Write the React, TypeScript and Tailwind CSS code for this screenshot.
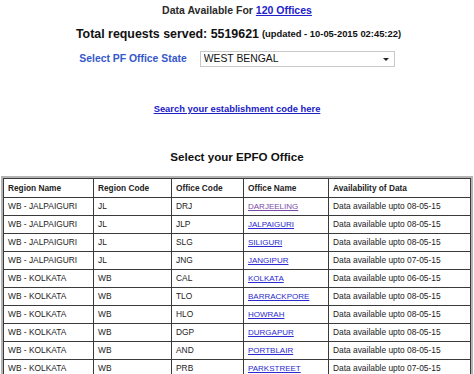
import { useState } from "react";

interface OfficeRow {
  region: string;
  regionCode: string;
  officeCode: string;
  officeName: string;
  upto: string;
  visited?: boolean;
}

const OFFICES: OfficeRow[] = [
  { region: "WB - JALPAIGURI", regionCode: "JL", officeCode: "DRJ", officeName: "DARJEELING", upto: "08-05-15", visited: true },
  { region: "WB - JALPAIGURI", regionCode: "JL", officeCode: "JLP", officeName: "JALPAIGURI", upto: "08-05-15" },
  { region: "WB - JALPAIGURI", regionCode: "JL", officeCode: "SLG", officeName: "SILIGURI", upto: "08-05-15" },
  { region: "WB - JALPAIGURI", regionCode: "JL", officeCode: "JNG", officeName: "JANGIPUR", upto: "07-05-15" },
  { region: "WB - KOLKATA", regionCode: "WB", officeCode: "CAL", officeName: "KOLKATA", upto: "06-05-15" },
  { region: "WB - KOLKATA", regionCode: "WB", officeCode: "TLO", officeName: "BARRACKPORE", upto: "08-05-15" },
  { region: "WB - KOLKATA", regionCode: "WB", officeCode: "HLO", officeName: "HOWRAH", upto: "08-05-15" },
  { region: "WB - KOLKATA", regionCode: "WB", officeCode: "DGP", officeName: "DURGAPUR", upto: "08-05-15" },
  { region: "WB - KOLKATA", regionCode: "WB", officeCode: "AND", officeName: "PORTBLAIR", upto: "08-05-15" },
  { region: "WB - KOLKATA", regionCode: "WB", officeCode: "PRB", officeName: "PARKSTREET", upto: "07-05-15" },
];

const cell = "border border-[#3a3a3a] px-[4px] text-left align-middle";

export default function App() {
  const [state, setState] = useState("WEST BENGAL");

  return (
    <div className="flex min-h-[374px] w-[474px] flex-col items-center overflow-hidden bg-white font-['Liberation_Sans',Arial,sans-serif] text-[#222]">
      {/* counters */}
      <div className="h-[20px] text-[10.5px] font-bold leading-[20px] text-[#2a2a2a]">
        Data Available For{" "}
        <a href="#" className="text-[#2222cc] underline">
          120 Offices
        </a>
      </div>
      <div className="flex h-[28px] items-center gap-[3px] pl-[3px] text-[#111]">
        <span className="text-[12.4px] font-bold">Total requests served: 5519621</span>
        <span className="text-[9.4px] font-bold">(updated - 10-05-2015 02:45:22)</span>
      </div>

      {/* state picker */}
      <div className="flex h-[22px] items-center gap-[13px]">
        <label className="text-[10.4px] font-bold text-[#3558cc]">Select PF Office State</label>
        <div className="relative flex h-[16px]">
          <select
            value={state}
            onChange={(e) => setState(e.target.value)}
            className="h-[16px] w-[195px] appearance-none rounded-none border border-[#c8c8c8] bg-white pl-[3px] text-[10.4px] leading-[14px] text-[#111] outline-none"
          >
            <option>WEST BENGAL</option>
            <option>KERALA</option>
            <option>TAMIL NADU</option>
          </select>
          <span className="pointer-events-none absolute right-[6px] top-[7px] h-0 w-0 border-x-[3px] border-t-[3px] border-x-transparent border-t-[#222]" />
        </div>
      </div>

      <div className="mt-[27px] h-[20px] leading-[20px]">
        <a href="#" className="text-[9.4px] font-bold text-[#2020c8] underline">
          Search your establishment code here
        </a>
      </div>

      <div className="mt-[30px] h-[20px] text-[11.6px] font-bold leading-[20px] text-[#111]">
        Select your EPFO Office
      </div>

      {/* offices table */}
      <div className="mt-[9px] w-[472px] border-2 border-[#b4b4b4]">
        <table className="w-full table-fixed border-collapse text-[8.4px] text-[#222]">
          <colgroup>
            <col className="w-[90px]" />
            <col className="w-[78px]" />
            <col className="w-[72px]" />
            <col className="w-[85px]" />
            <col />
          </colgroup>
          <thead>
            <tr className="h-[19px] font-bold text-[8.3px]">
              <th className={cell}>Region Name</th>
              <th className={cell}>Region Code</th>
              <th className={cell}>Office Code</th>
              <th className={cell}>Office Name</th>
              <th className={cell}>Availability of Data</th>
            </tr>
          </thead>
          <tbody>
            {OFFICES.map((o) => (
              <tr key={o.officeCode} className="h-[18px]">
                <td className={cell}>{o.region}</td>
                <td className={cell}>{o.regionCode}</td>
                <td className={cell}>{o.officeCode}</td>
                <td className={cell}>
                  <a
                    href="#"
                    className={`text-[8px] underline ${
                      o.visited ? "text-[#7a4aa6]" : "text-[#2a2ad0]"
                    }`}
                  >
                    {o.officeName}
                  </a>
                </td>
                <td className={`${cell} text-[8.4px]`}>Data available upto {o.upto}</td>
              </tr>
            ))}
          </tbody>
        </table>
      </div>
    </div>
  );
}
